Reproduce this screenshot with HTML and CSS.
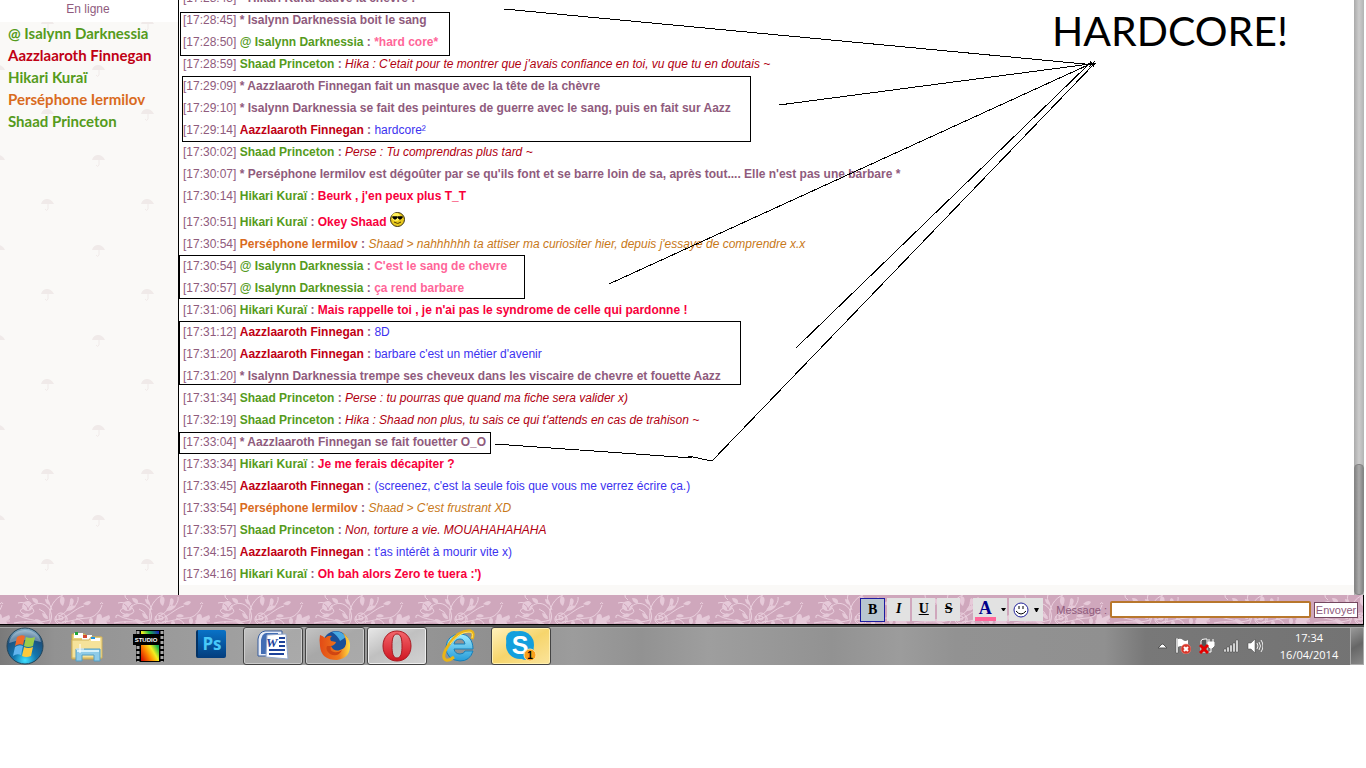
FILE: index.html
```
<!DOCTYPE html>
<html lang="fr">
<head>
<meta charset="utf-8">
<title>Chatbox</title>
<link rel="stylesheet" href="styles.css">
</head>
<body>
<div class="screen">
  <div class="chatbox">
    <aside class="members">
      <h1 class="members-title">En ligne</h1>
      <div class="members-body">
        <svg class="backdrop" aria-hidden="true">
          <defs>
            <pattern id="umbrellas" y="-3" width="100" height="90" patternUnits="userSpaceOnUse">
              <g id="umb" fill="#f0eae9"><path d="M41 5C42 1 45 0 47 0S52 1 54 5H41Z"/><path d="M48 5v5q-1 3-3 0" fill="none" stroke="#f0eae9"/></g>
              <use href="#umb" x="51" y="46"/><use href="#umb" x="-49" y="46"/>
            </pattern>
          </defs>
          <rect width="100%" height="100%" fill="url(#umbrellas)"/>
        </svg>
        <ul class="member-list">
          <li class="green">@ Isalynn Darknessia</li>
          <li class="red">Aazzlaaroth Finnegan</li>
          <li class="green">Hikari Kuraï</li>
          <li class="orange">Perséphone Iermilov</li>
          <li class="green">Shaad Princeton</li>
        </ul>
      </div>
    </aside>
    <main class="log">
      <div class="messages">
        <p><time>[17:28:43]</time> <b>* Hikari Kuraï sauve la chèvre !</b></p>
        <p><time>[17:28:45]</time> <b>* Isalynn Darknessia boit le sang</b></p>
        <p><time>[17:28:50]</time> <b><span class="green">@ Isalynn Darknessia</span> : <span class="pink">*hard core*</span></b></p>
        <p><time>[17:28:59]</time> <b><span class="green">Shaad Princeton</span> :</b> <i class="dark">Hika : C'etait pour te montrer que j'avais confiance en toi, vu que tu en doutais ~</i></p>
        <p><time>[17:29:09]</time> <b>* Aazzlaaroth Finnegan fait un masque avec la tête de la chèvre</b></p>
        <p><time>[17:29:10]</time> <b>* Isalynn Darknessia se fait des peintures de guerre avec le sang, puis en fait sur Aazz</b></p>
        <p><time>[17:29:14]</time> <b><span class="red">Aazzlaaroth Finnegan</span> :</b> <span class="blue">hardcore²</span></p>
        <p><time>[17:30:02]</time> <b><span class="green">Shaad Princeton</span> :</b> <i class="dark">Perse : Tu comprendras plus tard ~</i></p>
        <p><time>[17:30:07]</time> <b>* Perséphone Iermilov est dégoûter par se qu'ils font et se barre loin de sa, après tout.... Elle n'est pas une barbare *</b></p>
        <p><time>[17:30:14]</time> <b><span class="green">Hikari Kuraï</span> : <span class="hot">Beurk , j'en peux plus T_T</span></b></p>
        <p class="with-smiley"><time>[17:30:51]</time> <b><span class="green">Hikari Kuraï</span> : <span class="hot">Okey Shaad</span></b>
          <svg class="smiley" width="15" height="15" viewBox="0 0 15 15"><circle cx="7.500" cy="7.500" r="7" fill="#e8c81c" stroke="#3a3210"/><circle cx="6" cy="5" r="4" fill="#fff15a"/><path d="M2 5h11M3 5h4l-1 2H4zM8 5h4l-1 2H9z" fill="#000" stroke="#000"/><path d="M4 10q4 3 7 0" fill="none" stroke="#554000"/></svg></p>
        <p><time>[17:30:54]</time> <b><span class="orange">Perséphone Iermilov</span> :</b> <i class="amber">Shaad &gt; nahhhhhh ta attiser ma curiositer hier, depuis j'essaye de comprendre x.x</i></p>
        <p><time>[17:30:54]</time> <b><span class="green">@ Isalynn Darknessia</span> : <span class="pink">C'est le sang de chevre</span></b></p>
        <p><time>[17:30:57]</time> <b><span class="green">@ Isalynn Darknessia</span> : <span class="pink">ça rend barbare</span></b></p>
        <p><time>[17:31:06]</time> <b><span class="green">Hikari Kuraï</span> : <span class="hot">Mais rappelle toi , je n'ai pas le syndrome de celle qui pardonne !</span></b></p>
        <p><time>[17:31:12]</time> <b><span class="red">Aazzlaaroth Finnegan</span> :</b> <span class="blue">8D</span></p>
        <p><time>[17:31:20]</time> <b><span class="red">Aazzlaaroth Finnegan</span> :</b> <span class="blue">barbare c'est un métier d'avenir</span></p>
        <p><time>[17:31:20]</time> <b>* Isalynn Darknessia trempe ses cheveux dans les viscaire de chevre et fouette Aazz</b></p>
        <p><time>[17:31:34]</time> <b><span class="green">Shaad Princeton</span> :</b> <i class="dark">Perse : tu pourras que quand ma fiche sera valider x)</i></p>
        <p><time>[17:32:19]</time> <b><span class="green">Shaad Princeton</span> :</b> <i class="dark">Hika : Shaad non plus, tu sais ce qui t'attends en cas de trahison ~</i></p>
        <p><time>[17:33:04]</time> <b>* Aazzlaaroth Finnegan se fait fouetter O_O</b></p>
        <p><time>[17:33:34]</time> <b><span class="green">Hikari Kuraï</span> : <span class="hot">Je me ferais décapiter ?</span></b></p>
        <p><time>[17:33:45]</time> <b><span class="red">Aazzlaaroth Finnegan</span> :</b> <span class="blue">(screenez, c'est la seule fois que vous me verrez écrire ça.)</span></p>
        <p><time>[17:33:54]</time> <b><span class="orange">Perséphone Iermilov</span> :</b> <i class="amber">Shaad &gt; C'est frustrant XD</i></p>
        <p><time>[17:33:57]</time> <b><span class="green">Shaad Princeton</span> :</b> <i class="dark">Non, torture a vie. MOUAHAHAHAHA</i></p>
        <p><time>[17:34:15]</time> <b><span class="red">Aazzlaaroth Finnegan</span> :</b> <span class="blue">t'as intérêt à mourir vite x)</span></p>
        <p><time>[17:34:16]</time> <b><span class="green">Hikari Kuraï</span> : <span class="hot">Oh bah alors Zero te tuera :')</span></b></p>
      </div>
    </main>
    <div class="scrollbar"><div class="thumb"></div></div>
  </div>

  <form class="composer">
    <svg class="backdrop" aria-hidden="true">
      <defs>
        <pattern id="floral" x="10" width="100" height="60" patternUnits="userSpaceOnUse">
          <g fill="none" stroke="#ead0de" stroke-width="1">
            <path d="M38 30C44 24 42 14 35 10S22 10 18 15M40 25C38 12 45 3 53 0M45 25C57 24 65 13 74 11M48 21c8-2 12-8 13-17M52 27c8 0 17-4 25-4M34 29C26 24 15 25 8 20M42 15C40 9 36 5 38 0M60 15c5-3 9-8 8-13M29 14q6 2 8 8M77 23c7 0 13-6 15-13M66 23c4 2 7 3 8 6M4 28c14-3 24 1 36-3M85 26h15"/>
            <circle cx="51" cy="23" r="5"/><circle cx="51" cy="23" r="2"/><path d="M46 21q-3 5 2 8M56 21q3 4-1 7M8 8q6-2 11 3M18 5q-4-3-3-5M14 13q4-4 8 0t-1 6-9-1 2-5M90 9q2-3 3 0M8 20q-3 0-2 3"/>
          </g>
          <g fill="#e6cad9">
            <path d="M12 12q1-7 7-6 6 4 2 9-6 3-9-3ZM22 3q7 0 6 5-5 1-6-5ZM35 4q5 0 5 6-5-1-5-6ZM51 1q6 1 2 10-5-3-2-10ZM61 3q5 1 1 8-4-2-1-8ZM73 9q5-5 8-2-2 5-8 2ZM12 21q5-5 8-1-2 4-8 1ZM66 21q4-4 8 0-4 3-8 0ZM32 18q6 1 6 6-5 0-6-6ZM56 16q7 0 10-5-8-2-10 5ZM25 24q6 0 8 5-7 1-8-5ZM87 20q5-3 5 3l7-3q3 4-3 6l2 4-7-1-6 1 1-4Z"/>
            <ellipse cx="81" cy="26" rx="2" ry="3"/><circle cx="63" cy="28" r="2"/><circle cx="15" cy="27" r="1"/>
          </g>
          <path d="M14 9q4 2 4 6M22 9q-3 2-4 6" fill="none" stroke="#cfa5bc"/>
        </pattern>
      </defs>
      <rect width="100%" height="100%" fill="url(#floral)"/>
    </svg>
    <div class="tools">
      <button type="button" class="tool active"><b>B</b></button>
      <button type="button" class="tool"><b><i>I</i></b></button>
      <button type="button" class="tool"><b><u>U</u></b></button>
      <button type="button" class="tool"><b><s>S</s></b></button>
    </div>
    <div class="tools pickers">
      <button type="button" class="tool picker" aria-label="Couleur"><span class="ink">A</span><svg width="5" height="3"><path d="M0 0h5L3 3H2Z"/></svg></button>
      <button type="button" class="tool picker" aria-label="Smileys"><svg width="16" height="16" viewBox="0 0 16 16"><circle cx="8" cy="8" r="7" fill="#fff" stroke="#22229a"/><path d="M6 4v3M10 4v3" stroke="#000" stroke-width="1"/><path d="M3 9q5 6 10 0" fill="none" stroke="#000"/></svg><svg width="5" height="4"><path d="M0 0h5L3 4H2Z"/></svg></button>
    </div>
    <label for="message" class="message-label">Message :</label>
    <input id="message" class="message-input" type="text">
    <button type="submit" class="send">Envoyer</button>
  </form>

  <footer class="taskbar">
    <button class="start" aria-label="Démarrer">
      <svg width="38" height="38" viewBox="0 0 38 38"><defs><radialGradient id="orb" cx=".5" cy=".9" r=".9"><stop offset="0" stop-color="#3fe0ff"/><stop offset=".35" stop-color="#1377ae"/><stop offset=".75" stop-color="#1c4f7c"/><stop offset="1" stop-color="#8fb9cf"/></radialGradient></defs><circle cx="19" cy="19" r="18" fill="url(#orb)" stroke="#244458"/><path d="M3 16C5 6 13 3 19 3s14 3 16 12q-16-5-32 1Z" fill="#fff" opacity=".35"/><path d="M11 10q4-3 8-1l-2 9q-4-2-8 1Z" fill="#ef6a2c"/><path d="M20 10q4 2 9 0l-2 9q-5 2-9 0Z" fill="#9ccc4a"/><path d="M9 20q4-3 8-1l-2 9q-4-2-8 1Z" fill="#62b5ee"/><path d="M18 20q4 2 9 0l-2 9q-5 2-9 0Z" fill="#fcc93c"/></svg>
    </button>
    <div class="apps">
      <button class="app" aria-label="Explorateur"><svg width="36" height="34" viewBox="0 0 36 34"><path d="M3 5h13l2 3h14v22H3Z" fill="#ecd27a" stroke="#c5a44c"/><path d="M5 4h9v5H5Z" fill="#fff"/><path d="M6 3h3v3H6z" fill="#1fa637"/><path d="M13 6h10v5H13Z" fill="#fff"/><path d="M14 6h4v3h-4z" fill="#d44a33"/><path d="M3 11h17l2-3h11v21H3Z" fill="#f5e29a" stroke="#d2b35b"/><path d="M22 9h9v3h-9z" fill="#fff"/><path d="M22 8h4v2h-4z" fill="#2395e0"/><path d="M7 20h24v12h-6v-6H13v6H7Z" fill="#8ecbe8" stroke="#559fc4"/><path d="M8 21h22v2H8Z" fill="#d5f1fb"/><path d="M11 15v9M7 20h8" stroke="#fff"/></svg></button>
      <button class="app" aria-label="Studio"><svg width="32" height="32" viewBox="0 0 32 32"><defs><linearGradient id="film" x1="0" y1="1" x2="1" y2="0"><stop offset="0" stop-color="#d00000"/><stop offset=".3" stop-color="#ff8a00"/><stop offset=".5" stop-color="#f2ee20"/><stop offset=".7" stop-color="#20b548"/><stop offset="1" stop-color="#1212c0"/></linearGradient></defs><path d="M3 0h28v32H3Z" fill="#000"/><path d="M8 1h18v30H8Z" fill="url(#film)"/><path d="M5 1v31M29 1v31" stroke="#aaa" stroke-width="3" stroke-dasharray="3 2"/><path d="M0 4h26v11H0Z" fill="#000"/><text x="13" y="12" class="studio-word">STUDIO</text></svg></button>
      <button class="app" aria-label="Photoshop"><span class="ps">Ps</span></button>
      <button class="app open" aria-label="Word"><svg width="34" height="32" viewBox="0 0 34 32"><path d="M9 1h17v25H2V9Q3 2 9 1Z" fill="#e6ecf8" stroke="#355b9c"/><path d="M10 3h12v21H5V10Q6 4 10 3Z" fill="#426db4"/><path d="m11 5 19-1 2 25-22-2Z" fill="#fff" stroke="#94a8cc"/><text x="10" y="17" class="word-letter">W</text><path d="M23 8h6M23 12h6M23 16h6M13 20h16M13 24h15" stroke="#1d429a" stroke-width="2"/></svg></button>
      <button class="app open" aria-label="Firefox"><svg width="32" height="32" viewBox="0 0 32 32"><defs><linearGradient id="fox"><stop offset="0" stop-color="#e24a16"/><stop offset=".65" stop-color="#ef7a1c"/><stop offset="1" stop-color="#ffdf45"/></linearGradient></defs><circle cx="17" cy="14" r="13" fill="#194f99"/><path d="M13 2q9-2 14 5l-6 4q-2-5-8-9Z" fill="#49a9e2"/><path d="M1 5q3 1 5 3 3-3 7-2-3 2-1 5l5 1q-1 3-5 4 3 6 9 4 7-2 6-9-1-6-4-9 7 5 8 12 1 14-13 16Q2 30 1 16Q0 10 1 5Z" fill="url(#fox)"/><path d="M12 16q-2 5 3 6 4 1 8-2-4 8-12 4-5-4-3-8Z" fill="#d04512"/></svg></button>
      <button class="app open bright" aria-label="Opera"><svg width="30" height="32" viewBox="0 0 30 32"><defs><linearGradient id="opera" x2="0" y2="1"><stop offset="0" stop-color="#f4666c"/><stop offset="1" stop-color="#cf1520"/></linearGradient></defs><path fill-rule="evenodd" d="M15 1c8 0 14 6 14 15s-6 15-14 15S1 25 1 16 7 1 15 1Zm0 3c-4 0-5 5-5 12s1 12 5 12 5-5 5-12-1-12-5-12Z" fill="url(#opera)" stroke="#a91a22"/></svg></button>
      <button class="app" aria-label="Internet Explorer"><svg width="34" height="34" viewBox="0 0 34 34"><defs><linearGradient id="ie" x2="0" y2="1"><stop offset="0" stop-color="#a2ecff"/><stop offset="1" stop-color="#249bd8"/></linearGradient></defs><path fill-rule="evenodd" d="M18 5c8 0 13 6 13 15H12q1 5 6 5 4 0 5-3h8q-3 10-13 10Q4 31 4 18 5 6 18 5Zm-6 10h11q-1-5-5-5-5 0-6 5Z" fill="url(#ie)" stroke="#177fb9"/><path d="M30 10q3-7-2-8Q17 1 8 14-2 28 4 31q3 1 8-3" fill="none" stroke="#e9b417" stroke-width="3"/><path d="M30 9q2-6-3-6Q17 3 8 15" fill="none" stroke="#ffe36c"/></svg></button>
      <button class="app open alert" aria-label="Skype"><svg width="34" height="34" viewBox="0 0 34 34"><g fill="#139fdd"><circle cx="10" cy="10" r="8"/><circle cx="16" cy="16" r="14"/><circle cx="22" cy="23" r="8"/></g><text x="16" y="25" class="skype-letter">S</text><circle cx="26" cy="26" r="6" fill="#f9a01b" stroke="#ffe4a0"/><text x="26" y="30" class="badge-number">1</text></svg></button>
    </div>
    <div class="tray">
      <svg width="9" height="6" viewBox="0 0 9 6"><path d="M0 5 4 1h1l4 4Z" fill="#fff" stroke="#555"/></svg>
      <svg width="16" height="16" viewBox="0 0 16 16"><path d="M1 0h2v15H1Z" fill="#fff" stroke="#444" stroke-width=".5"/><path d="M3 1q3-1 5 1t5 0v8q-3 1-5-1t-5 0Z" fill="#fff"/><circle cx="11" cy="11" r="5" fill="#d7372b" stroke="#f49a90" stroke-width=".5"/><path d="m9 9 4 4m0-4-4 4" stroke="#fff" stroke-width="2"/></svg>
      <svg width="16" height="16" viewBox="0 0 16 16"><path d="M2 3q0-2 4-2h2v13H2Z" fill="#555" stroke="#fff"/><path d="M9 4h6v4l-2 2h-2L9 8ZM10 1v3M14 1v3" fill="#fff" stroke="#fff"/><path d="M12 9v5H8" fill="none" stroke="#fff"/><path d="m1 7 8 8m0-8-8 8" stroke="#e30000" stroke-width="3"/></svg>
      <svg width="16" height="14" viewBox="0 0 16 14"><path d="M1 10h2v3H1ZM4 8h2v5H4ZM7 6h2v7H7ZM10 4h2v9h-2ZM13 1h2v12h-2Z" fill="#fff" stroke="#444" stroke-width=".5"/></svg>
      <svg width="16" height="14" viewBox="0 0 16 14"><path d="M1 4h3l4-4v14l-4-4H1Z" fill="#fff" stroke="#444" stroke-width=".5"/><path d="M10 4q2 3 0 6M12 3q3 4 0 8M14 1q4 6 0 12" fill="none" stroke="#eee"/></svg>
      <div class="clock"><time>17:34</time><time>16/04/2014</time></div>
    </div>
    <button class="show-desktop" aria-label="Bureau"></button>
  </footer>

  <svg class="annotations" aria-hidden="true" fill="none" stroke="#000" shape-rendering="crispEdges">
    <path d="M180.500 12.500h269v43h-269ZM182.500 76.500h568v65h-568ZM179.500 255.500h345v43h-345ZM179.500 321.500h561v63h-561ZM179.500 432.500h311v21h-311Z"/>
    <path d="M504 9 1095 65M779 105 1090 64M609 284 1088 65M796 348 1088 65M1095 63 712 461 688 456M495 444 692 458M1088 63h8M1089 67l6-6M1090 61l4 6"/>
  </svg>
  <div class="shout">HARDCORE!</div>
</div>
</body>
</html>
```

FILE: styles.css
```
* { box-sizing: border-box; }

body {
  margin: 0;
  background: #fff;
  font: 12px/22px "Liberation Sans", Arial, sans-serif;
  color: #8f5b7d;
}

button, input { font: inherit; color: inherit; margin: 0; padding: 0; border: 0; }
svg { flex: none; }

.screen { position: relative; margin-right: 2px; overflow: hidden; }
.backdrop { position: absolute; inset: 0; width: 100%; height: 100%; }

.chatbox { display: flex; background: #faf9f7; }

.members { width: 179px; flex: none; display: flex; flex-direction: column; border-right: 1px solid #000; }
.members-title { margin: 0; padding-right: 2px; height: 22px; background: #fff; font-size: 12px; font-weight: 400; line-height: 18px; text-align: center; }
.members-body { position: relative; flex: 1; }
.member-list { position: relative; list-style: none; margin: 0; padding: 0 8px; font-family: Lato, sans-serif; font-size: 15px; font-weight: 700; }

.log { flex: 1; min-width: 0; padding-bottom: 10px; }
.messages { background: #fff; overflow: hidden; }
.messages p { margin: 0; padding-left: 4px; white-space: nowrap; }
.messages p:first-child { margin-top: -13px; }
.messages .with-smiley { padding-top: 4px; height: 26px; }
.smiley { vertical-align: -1px; }

.green { color: #559b1c; }
.red { color: #c00014; }
.orange { color: #d96b1e; }
.pink { color: #ff6699; }
.hot { color: #f8003c; }
.dark { color: #b00010; }
.amber { color: #c87818; }
.blue { color: #3c32f0; }

.scrollbar { width: 10px; flex: none; display: flex; align-items: flex-end; background: linear-gradient(90deg, #aaa, #ccc 50%, #b4b4b4); }
.thumb { width: 100%; height: 22%; border-radius: 4px; border: 1px solid #858585; background: linear-gradient(90deg, #858585, #aaa 50%, #858585); }

.composer { position: relative; display: flex; align-items: center; justify-content: flex-end; height: 30px; padding-right: 5px; background: #cfa7bc; border-bottom: 1px solid #000; border-right: 1px solid #000; }
.composer > * { position: relative; }
.composer > .backdrop { position: absolute; }
.tools { display: flex; gap: 2px; margin-right: 13px; }
.tool { width: 23px; height: 23px; background: #e2e2e2; color: #000; font: 14px/20px "Liberation Serif", serif; }
.tool.active { width: 25px; height: 24px; background: #b8c6d0; border: 1px solid #1c1ca0; }
.picker { display: flex; align-items: center; justify-content: center; gap: 5px; width: 34px; }
.ink { width: 21px; border-bottom: 4px solid #ff6699; color: #00008b; font-size: 18px; font-weight: 700; line-height: 18px; }
.message-label { margin-right: 3px; font-size: 11px; }
.message-input { width: 201px; height: 17px; padding: 0 3px; border: 2px solid #b8772c; border-radius: 2px; background: #fff; }
.send { margin-left: 3px; width: 44px; height: 16px; background: #fff; border: 1px solid #744760; font-size: 11px; line-height: 14px; }

.taskbar { display: flex; align-items: stretch; height: 40px; border-top: 2px solid #4c4c4c; background: linear-gradient(90deg, #7a7a7a 0, #929292 4%, #a0a0a0 18%, #909090 36%, #9c9c9c 42%, #929292 47%, #9e9e9e 52%, #929292 61%, #9c9c9c 66%, #929292 70%, #909090 81%, #787878 84%, #737373); box-shadow: inset 0 1px #a8a8a8; }
.start { width: 50px; margin-right: 7px; display: flex; align-items: center; justify-content: center; background: none; }
.apps { display: flex; gap: 2px; }
.app { width: 60px; display: flex; align-items: center; justify-content: center; background: none; }
.app.open { border: 1px solid #444; border-radius: 3px; background: linear-gradient(150deg, #c4c4c4, #a8a8a8 45%, #aaa); box-shadow: inset 0 0 0 1px #ccc; }
.app.bright { background: linear-gradient(150deg, #e8e8e8, #c0c0c0 45%, #d2d2d2); box-shadow: inset 0 0 0 1px #eee; }
.app.alert { background: linear-gradient(150deg, #fff1bd, #f6d56c 50%, #fbe49b); box-shadow: inset 0 0 0 1px #fff0b0; }
.ps { width: 30px; height: 28px; margin-bottom: 4px; background: linear-gradient(#0872c7, #043d7d); border-left: 2px solid #043263; border-radius: 2px; color: #49c8f8; font: 700 17px/27px "Open Sans", sans-serif; }
.studio-word { font: 700 6px "Liberation Sans", sans-serif; fill: #fff; text-anchor: middle; }
.word-letter { font: italic 700 13px "Liberation Serif", serif; fill: #1d429a; }
.skype-letter { font: 700 25px "Liberation Sans", sans-serif; fill: #fff; text-anchor: middle; }
.badge-number { font: 700 10px "Liberation Sans", sans-serif; fill: #000; text-anchor: middle; }
.tray { margin-left: auto; display: flex; align-items: center; gap: 8px; }
.clock { display: flex; flex-direction: column; margin: 0 6px 0 5px; width: 66px; text-align: center; color: #fff; font: 11px/17px "Open Sans", sans-serif; }
.show-desktop { width: 14px; margin-left: 2px; border: 1px solid #aaa; background: linear-gradient(150deg, #999, #666 50%, #888); }

.annotations { position: absolute; inset: 0; width: 100%; height: 100%; pointer-events: none; }
.shout { position: absolute; top: 6px; left: 1052px; color: #000; font: 41px/50px Lato, sans-serif; }
```
